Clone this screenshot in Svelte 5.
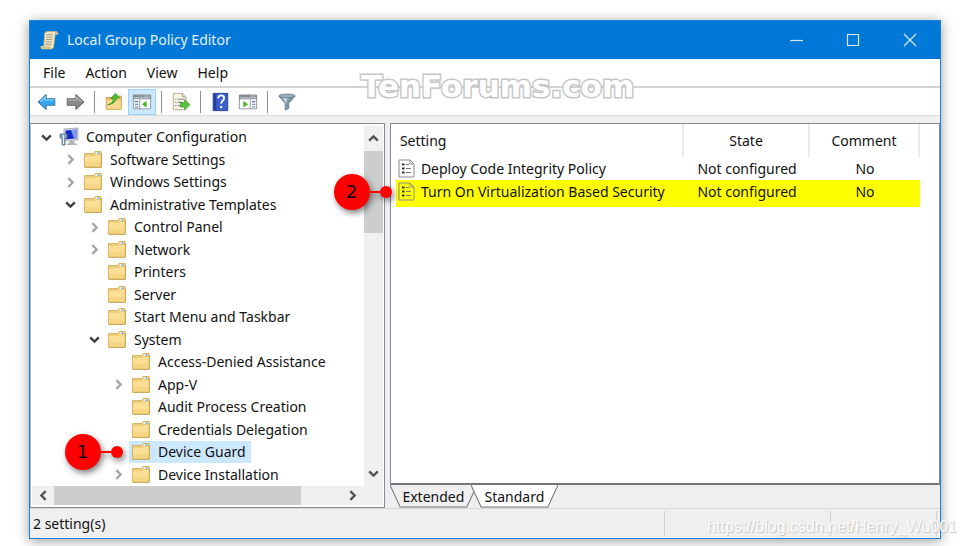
<script lang="ts">
  type TreeNode = {
    name: string;
    level: number;
    state?: 'open' | 'closed';
    root?: boolean;
    callout?: number;
  };

  const menus = ['File', 'Action', 'View', 'Help'];

  const nodes: TreeNode[] = [
    { name: 'Computer Configuration', level: 0, state: 'open', root: true },
    { name: 'Software Settings', level: 1, state: 'closed' },
    { name: 'Windows Settings', level: 1, state: 'closed' },
    { name: 'Administrative Templates', level: 1, state: 'open' },
    { name: 'Control Panel', level: 2, state: 'closed' },
    { name: 'Network', level: 2, state: 'closed' },
    { name: 'Printers', level: 2 },
    { name: 'Server', level: 2 },
    { name: 'Start Menu and Taskbar', level: 2 },
    { name: 'System', level: 2, state: 'open' },
    { name: 'Access-Denied Assistance', level: 3 },
    { name: 'App-V', level: 3, state: 'closed' },
    { name: 'Audit Process Creation', level: 3 },
    { name: 'Credentials Delegation', level: 3 },
    { name: 'Device Guard', level: 3, callout: 1 },
    { name: 'Device Installation', level: 3, state: 'closed' }
  ];

  const settings = [
    { name: 'Deploy Code Integrity Policy', state: 'Not configured', comment: 'No' },
    { name: 'Turn On Virtualization Based Security', state: 'Not configured', comment: 'No' }
  ];

  let selected = $state('Device Guard');
  let tab = $state('Standard');
</script>

<svelte:head>
  <title>Local Group Policy Editor</title>
</svelte:head>

{#snippet chevron(dir: string)}
  <svg class="chevron {dir}" viewBox="0 0 12 12" aria-hidden="true">
    <path d="M2 4l4 4 4-4" fill="none" stroke="currentColor" stroke-width="2.2" />
  </svg>
{/snippet}

{#snippet callout(n: number)}
  <span class="callout">
    <span class="disc">{n}</span>
    <span class="stem"></span>
    <span class="dot"></span>
  </span>
{/snippet}

<main class="page">
  <section class="window">
    <header class="titlebar">
      <svg class="app-icon" viewBox="0 0 20 20" aria-hidden="true">
        <path d="M5 2q1-1.500 3-1.500h10q-2 .5-2 3L14.500 16q-.5 3-3 3H2q-1.500-1-1-3h3z" fill="#f1e6c4" stroke="#c9b37c" stroke-width=".7" />
        <path d="M16 3.500q.5-3 2.500-2.500 1.500 1 .3 3H16zM1 16h10q-.5 2 .5 3H2q-1.500-1-1-3z" fill="#d9c48c" />
        <path d="M7 4h6.500M6.700 6.500h6.500M6.300 9h6.500M6 11.500h6.500M5.500 14H12" stroke="#9a9488" stroke-width="1" />
      </svg>
      <h1>Local Group Policy Editor</h1>
      <div class="controls">
        <button type="button" aria-label="Minimize">
          <svg viewBox="0 0 14 14"><path d="M1 7.500h13" /></svg>
        </button>
        <button type="button" aria-label="Maximize">
          <svg viewBox="0 0 14 14"><path d="M1.500 1.500h11v11h-11z" /></svg>
        </button>
        <button type="button" aria-label="Close">
          <svg viewBox="0 0 14 14"><path d="M1 1l12 12M13 1L1 13" /></svg>
        </button>
      </div>
    </header>

    <nav class="menubar">
      {#each menus as menu}
        <button type="button">{menu}</button>
      {/each}
      <span class="brand-mark">TenForums.com</span>
    </nav>

    <div class="toolbar">
      <button type="button" aria-label="Back">
        <svg viewBox="0 0 22 22">
          <path d="M1.500 11L10 3v4.500h9.500v7H10V19z" fill="#35a7ee" stroke="#3b79ad" stroke-width="1.200" stroke-linejoin="round" />
          <path d="M3.500 10.500L9 5.500v3.300h9.500" fill="none" stroke="#8fd6fb" stroke-width="1.300" />
        </svg>
      </button>
      <button type="button" aria-label="Forward">
        <svg viewBox="0 0 22 22">
          <path d="M20.500 11L12 3v4.500H2.500v7H12V19z" fill="#8b8b8b" stroke="#6b6b6b" stroke-width="1.200" stroke-linejoin="round" />
          <path d="M3.500 8.800H13V5.800l5.500 5" fill="none" stroke="#b5b5b5" stroke-width="1.200" />
        </svg>
      </button>
      <span class="divider"></span>
      <button type="button" aria-label="Up one level">
        <svg viewBox="0 0 22 22">
          <path d="M2.500 6h8l1.500-1.500h7V19h-16.500z" fill="#eac46a" stroke="#c79a42" />
          <path d="M3 9h15.500v9.500H3z" fill="#f6d98c" />
          <path d="M4 14q6-1 6.500-7l-3 .2L12.500 1.500 17 6.500l-3-.2Q13 13 4 14z" fill="#4cc237" stroke="#2d9220" stroke-width=".8" />
        </svg>
      </button>
      <button type="button" class="pressed" aria-label="Show or hide console tree">
        <svg viewBox="0 0 22 22">
          <path d="M1.500 3.500h19v15h-19z" fill="#fff" stroke="#8d939b" />
          <path d="M1 3h20v5H1z" fill="#858d98" />
          <path d="M2 6.500h18" stroke="#d8dce2" />
          <path d="M14 4.500h1M16 4.500h1M18 4.500h1" stroke="#fff" />
          <path d="M8.500 8v11" stroke="#8d939b" />
          <path d="M3 10.500h4M3 13.500h4M3 16.500h4" stroke="#4676b2" stroke-width="1.300" />
          <path d="M16 10v7l-5-3.500z" fill="#41b31c" />
        </svg>
      </button>
      <span class="divider"></span>
      <button type="button" aria-label="Export list">
        <svg viewBox="0 0 22 22">
          <path d="M2.500 1.500h10l4 4v14h-14z" fill="#faf6df" stroke="#aaa58d" />
          <path d="M12.500 1.500v4h4" fill="#e2ddc4" stroke="#aaa58d" />
          <path d="M4.500 8h1.500M4.500 11.500h1.500M4.500 15h1.500M7.500 8h7M7.500 11.500h4M7.500 15h4" stroke="#8087a8" stroke-width="1.300" />
          <path d="M10.500 11.500H15V8.500l6 5.500-6 5.500v-3h-4.500z" fill="#56c23f" stroke="#319426" stroke-width=".7" />
        </svg>
      </button>
      <span class="divider"></span>
      <button type="button" aria-label="Help">
        <svg viewBox="0 0 22 22">
          <path d="M3.500 1.500h16v19h-16z" fill="#3b60cb" stroke="#233c8c" />
          <path d="M4 2h3v18H4z" fill="#243f9d" />
          <path d="M9 7q.2-3.200 3.300-3.200 3.200 0 3.200 3 0 1.700-1.800 3-1.300 1-1.300 3.200" fill="none" stroke="#fff" stroke-width="2" />
          <circle cx="12.300" cy="16.500" r="1.300" fill="#fff" />
        </svg>
      </button>
      <button type="button" aria-label="Show or hide action pane">
        <svg viewBox="0 0 22 22">
          <path d="M1.500 3.500h19v15h-19z" fill="#fff" stroke="#8d939b" />
          <path d="M1 3h20v5H1z" fill="#858d98" />
          <path d="M2 6.500h18" stroke="#d8dce2" />
          <path d="M14 4.500h1M16 4.500h1M18 4.500h1" stroke="#fff" />
          <path d="M13.500 8v11" stroke="#8d939b" />
          <path d="M15.500 10.500h3.500M15.500 13.500h3.500M15.500 16.500h3.500" stroke="#4676b2" stroke-width="1.300" />
          <path d="M6 10v7l5-3.500z" fill="#41b31c" />
        </svg>
      </button>
      <span class="divider"></span>
      <button type="button" aria-label="Filter">
        <svg viewBox="0 0 22 22">
          <path d="M2 4.500l7 8V20l4-2v-5.500l7-8z" fill="#7d97a8" stroke="#5f7684" stroke-width=".8" />
          <path d="M10 12.500l-4-6h6z" fill="#c3d4de" />
          <ellipse cx="11" cy="4.300" rx="9" ry="2" fill="#9db2bf" stroke="#607785" stroke-width=".9" />
        </svg>
      </button>
    </div>

    <div class="panes">
      <section class="tree-pane">
        <div class="tree-area">
          <ul class="tree">
            {#each nodes as node}
              <li class="level-{node.level}">
                {#if node.callout}
                  {@render callout(node.callout)}
                {/if}
                <span class="toggle {node.state ?? ''}">
                  {#if node.state}
                    {@render chevron(node.state === 'open' ? 'down' : 'right')}
                  {/if}
                </span>
                <button type="button" class="node" class:selected={selected === node.name} onclick={() => (selected = node.name)}>
                  {#if node.root}
                    <svg class="node-icon" viewBox="0 0 20 20" aria-hidden="true">
                      <path d="M5 2l14-1v12l-14 1z" fill="#d9dce0" stroke="#9aa0a8" stroke-width=".8" />
                      <path d="M6.500 3.500l11-1v9l-11 .8z" fill="#1427c9" />
                      <path d="M12 3l5.500-.5v9l-2.500.2z" fill="#7f9af5" />
                      <path d="M11 14h4l1 2.500H10zM8 16.500h10V18H8z" fill="#b0b4b8" />
                      <path d="M1 7h7v4H6v7H3v-7H1z" fill="#8fa9bd" stroke="#5b7588" stroke-width=".8" />
                      <path d="M4.500 8v9" stroke="#e6f2fa" />
                    </svg>
                  {:else}
                    <svg class="node-icon" viewBox="0 0 20 20" aria-hidden="true">
                      <path d="M1.500 3.500h9l1.500-2h6v15.500h-16.500z" fill="#eccb79" stroke="#d4b061" stroke-width=".9" />
                      <path d="M12.500 3.200h4.500" stroke="#fff" stroke-width="1.600" />
                      <path d="M14.500 3.200h2" stroke="#4d9bd8" stroke-width="1.400" />
                      <path d="M2 6h9l1.500-1H18v11.800H2z" fill="#fbdf94" />
                      <path d="M2 12h16v4.800H2z" fill="#f7d683" />
                      <path d="M18.300 3v14.300H1.500" fill="none" stroke="#c79f4c" />
                    </svg>
                  {/if}
                  <span class="node-label">{node.name}</span>
                </button>
              </li>
            {/each}
          </ul>
          <div class="scroll-v">
            <button type="button" aria-label="Scroll up">{@render chevron('up')}</button>
            <span class="thumb"></span>
            <button type="button" aria-label="Scroll down">{@render chevron('down')}</button>
          </div>
        </div>
        <div class="scroll-h">
          <button type="button" aria-label="Scroll left">{@render chevron('left')}</button>
          <span class="thumb"></span>
          <button type="button" aria-label="Scroll right">{@render chevron('right')}</button>
        </div>
      </section>

      <section class="list-pane">
        <div class="list">
          <table>
            <thead>
              <tr>
                <th class="col-name">Setting</th>
                <th class="col-state">State</th>
                <th class="col-comment">Comment</th>
              </tr>
            </thead>
            <tbody>
              {#each settings as setting, i}
                <tr class:marked={i === 1}>
                  <td>
                    <div class="setting">
                      {#if i === 1}
                        {@render callout(2)}
                      {/if}
                      <svg class="doc-icon" viewBox="0 0 17 19" aria-hidden="true">
                        <path d="M1 1h11l4 4v13H1z" fill={i === 1 ? 'none' : '#fdfdfd'} stroke="#8b8b8b" />
                        <path d="M12 1v4h4" fill="none" stroke="#8b8b8b" />
                        <path d="M4 5.500h2.500M4 9.500h2.500M4 13.500h2.500" stroke="#333" stroke-width="2" />
                        <path d="M8 5.500h3M8 9.500h5M8 13.500h5" stroke="#777" stroke-width="1.200" />
                      </svg>
                      <span>{setting.name}</span>
                    </div>
                  </td>
                  <td>{setting.state}</td>
                  <td>{setting.comment}</td>
                </tr>
              {/each}
            </tbody>
          </table>
        </div>
        <div class="tabs">
          {#each ['Extended', 'Standard'] as name}
            <button type="button" class:active={tab === name} onclick={() => (tab = name)}>
              <svg viewBox="0 0 86 24" preserveAspectRatio="none" aria-hidden="true">
                <path d="M0 0l10 23h66l10-23" />
              </svg>
              <span>{name}</span>
            </button>
          {/each}
        </div>
      </section>
    </div>

    <footer class="status">
      <span class="status-text">2 setting(s)</span>
      <span class="cell wide"></span>
      <span class="cell narrow"></span>
    </footer>
  </section>
  <span class="source">https://blog.csdn.net/Henry_Wu001</span>
</main>

<style>
  :global(body) {
    margin: 0;
    background: #fff;
  }

  .page {
    box-sizing: border-box;
    position: relative;
    min-height: 100vh;
    padding: 20px 24px 7px 29px;
    display: flex;
    font-family: 'Noto Sans', 'Open Sans', sans-serif;
    font-size: 14px;
    line-height: 20px;
    color: #111;
  }

  .window {
    flex: 1;
    min-width: 0;
    display: flex;
    flex-direction: column;
    border: 1px solid #1a7fd6;
    background: #efefef;
    box-shadow: 0 2px 12px rgba(0, 0, 0, 0.4);
  }

  button {
    margin: 0;
    padding: 0;
    border: 0;
    background: none;
    font: inherit;
    color: inherit;
  }

  .titlebar {
    height: 38px;
    padding: 0 2px 0 10px;
    display: flex;
    align-items: center;
    background: #0078d7;
    color: #fff;
  }

  .app-icon {
    width: 19px;
    height: 19px;
  }

  h1 {
    flex: 1;
    margin: 0 0 0 8px;
    font-size: 14px;
    font-weight: 400;
    color: #e4f0fb;
  }

  .controls {
    display: flex;
  }

  .controls button {
    width: 57px;
    height: 38px;
    display: grid;
    place-items: center;
  }

  .controls svg {
    width: 14px;
    height: 14px;
    fill: none;
    stroke: #dcebfa;
    stroke-width: 1.2;
  }

  .menubar {
    position: relative;
    height: 27px;
    padding-left: 13px;
    display: flex;
    align-items: center;
    gap: 20px;
    background: #fff;
    border-bottom: 2px solid #d0d2d3;
  }

  .brand-mark {
    position: absolute;
    left: 331px;
    top: 9px;
    z-index: 1;
    font-family: 'DejaVu Sans', sans-serif;
    font-size: 31px;
    line-height: 36px;
    font-weight: 700;
    color: #fff;
    -webkit-text-stroke: 3px #c6c6c6;
    paint-order: stroke fill;
  }

  .toolbar {
    height: 27px;
    padding-left: 3px;
    display: flex;
    align-items: center;
    background: #fff;
    border-bottom: 1px solid #dcdcdc;
  }

  .toolbar button {
    width: 28px;
    height: 26px;
    display: grid;
    place-items: center;
  }

  .toolbar button svg {
    width: 20px;
    height: 20px;
  }

  .toolbar .pressed {
    background: #cce8ff;
    box-shadow: inset 0 0 0 1px #99d1ff;
  }

  .divider {
    width: 1px;
    height: 22px;
    margin: 0 5px;
    background: #8f8f8f;
  }

  .panes {
    flex: 1;
    min-height: 0;
    padding-top: 7px;
    display: flex;
    gap: 5px;
  }

  .tree-pane {
    flex: 0 0 39%;
    box-sizing: border-box;
    display: flex;
    flex-direction: column;
    border: 1px solid #868b95;
    border-left-color: #b9bcc2;
    padding: 0 1px 2px 1px;
    background: #fff;
  }

  .tree-area {
    flex: 1;
    display: flex;
  }

  .tree {
    flex: 1;
    margin: 0;
    padding: 2px 0 0 3px;
    display: flex;
    flex-direction: column;
    list-style: none;
  }

  .tree li {
    position: relative;
    flex: 1;
    display: flex;
    align-items: center;
  }

  .level-1 {
    margin-left: 24px;
  }

  .level-2 {
    margin-left: 48px;
  }

  .level-3 {
    margin-left: 72px;
  }

  .toggle {
    width: 22px;
    display: grid;
    place-items: center;
    color: #404040;
  }

  .toggle.closed {
    color: #a6a6a6;
  }

  .chevron {
    display: block;
    width: 13px;
    height: 13px;
  }

  .chevron.right {
    transform: rotate(-90deg);
  }

  .chevron.left {
    transform: rotate(90deg);
  }

  .chevron.up {
    transform: rotate(180deg);
  }

  .node {
    height: 22px;
    padding: 0 5px 0 2px;
    display: flex;
    align-items: center;
    gap: 7px;
  }

  .node.selected {
    background: #cce8ff;
  }

  .node-icon {
    width: 20px;
    height: 20px;
  }

  .scroll-v {
    width: 19px;
    margin-top: 2px;
    display: flex;
    flex-direction: column;
    background: #f0f0f0;
    color: #555;
  }

  .scroll-v button {
    height: 25px;
    display: grid;
    place-items: center;
  }

  .scroll-v .thumb {
    height: 82px;
    margin-bottom: auto;
    background: #cdcdcd;
  }

  .scroll-h {
    height: 19px;
    display: flex;
    background: #f0f0f0;
    color: #555;
  }

  .scroll-h button {
    width: 22px;
    display: grid;
    place-items: center;
  }

  .scroll-h .thumb {
    width: 247px;
    margin-right: auto;
    background: #cdcdcd;
  }

  .scroll-h button:last-child {
    margin-right: 19px;
  }

  .list-pane {
    flex: 1;
    min-width: 0;
    display: flex;
    flex-direction: column;
  }

  .list {
    flex: 1;
    border: 1px solid #868b95;
    border-bottom: 2px solid #73777d;
    background: #fff;
  }

  table {
    width: calc(100% - 24px);
    margin-left: 5px;
    table-layout: fixed;
    border-collapse: separate;
    border-spacing: 0;
  }

  th,
  td {
    padding: 0;
    font-weight: 400;
    text-align: center;
  }

  th {
    box-sizing: border-box;
    height: 33px;
    border-right: 2px solid #ebebeb;
  }

  th.col-name {
    padding-left: 4px;
    text-align: left;
  }

  .col-state {
    width: 24%;
  }

  .col-comment {
    width: 21%;
  }

  td {
    box-sizing: border-box;
    height: 23px;
  }

  .marked td {
    height: 27px;
    padding-bottom: 4px;
    background: #ff0;
  }

  .setting {
    position: relative;
    padding-left: 2px;
    display: flex;
    align-items: center;
    gap: 6px;
    white-space: nowrap;
  }

  .doc-icon {
    width: 17px;
    height: 19px;
  }

  .tabs {
    height: 23px;
    display: flex;
  }

  .tabs button {
    position: relative;
    width: 87px;
    height: 23px;
  }

  .tabs button + button {
    margin-left: -6px;
  }

  .tabs svg {
    position: absolute;
    inset: 0;
    width: 100%;
    height: 100%;
    fill: #efefef;
    stroke: #777;
  }

  .tabs .active svg {
    fill: #fff;
  }

  .tabs span {
    position: relative;
  }

  .status {
    height: 29px;
    padding-left: 3px;
    display: flex;
    align-items: center;
    border-top: 1px solid #d7d7d7;
  }

  .status-text {
    flex: 1;
  }

  .cell {
    box-sizing: border-box;
    height: 25px;
    border-left: 1px solid #d0d0d0;
  }

  .wide {
    width: 166px;
  }

  .narrow {
    width: 107px;
    border-right: 1px solid #d0d0d0;
    margin-right: 3px;
  }

  /* numbered markers that point at a row from its left side */
  .callout {
    position: absolute;
    right: 100%;
    top: 50%;
    z-index: 2;
    display: flex;
    align-items: center;
    transform: translateY(-50%);
    filter: drop-shadow(2px 3px 3px rgba(0, 0, 0, 0.5));
  }

  .tree .callout {
    right: auto;
    left: -42px;
  }

  .setting .callout {
    margin-right: 4px;
  }

  .disc {
    width: 36px;
    height: 36px;
    border-radius: 50%;
    background: #f00;
    color: #000;
    font-family: 'DejaVu Sans', sans-serif;
    font-size: 18px;
    line-height: 36px;
    text-align: center;
  }

  .stem {
    width: 10px;
    height: 2px;
    background: #f00;
  }

  .dot {
    width: 12px;
    height: 12px;
    border-radius: 50%;
    background: #f00;
  }

  .source {
    position: absolute;
    right: 8px;
    bottom: 9px;
    font-family: 'Liberation Sans', Arial, sans-serif;
    font-size: 16px;
    color: #fafafa;
    text-shadow: 1px 1px 1px #c4c4c4;
  }
</style>
